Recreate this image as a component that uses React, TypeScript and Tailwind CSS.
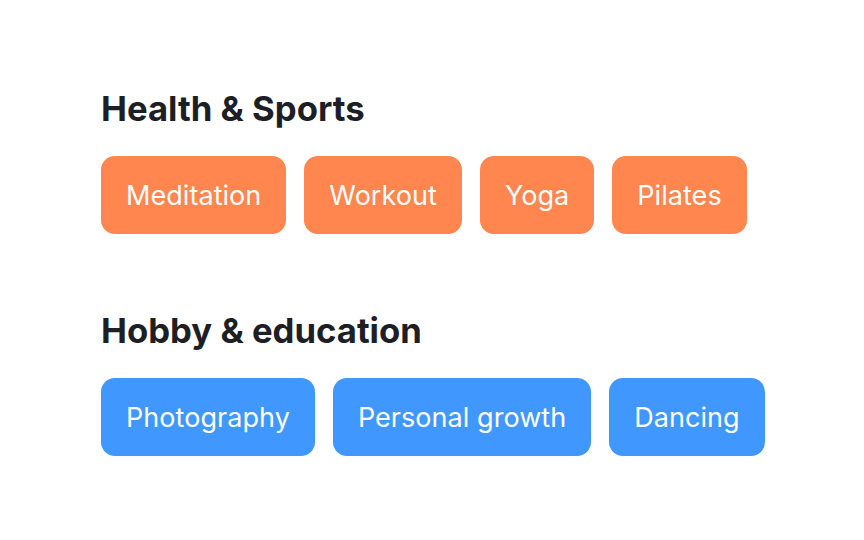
import React from 'react';

const groups = [
  {
    title: 'Health & Sports',
    color: 'bg-[#ff864e]',
    items: ['Meditation', 'Workout', 'Yoga', 'Pilates'],
  },
  {
    title: 'Hobby & education',
    color: 'bg-[#4097fe]',
    items: ['Photography', 'Personal growth', 'Dancing'],
  },
];

export default function App() {
  return (
    <div className="w-[864px] h-[540px] bg-white font-['Inter',sans-serif] pl-[101px] pt-[88px] flex flex-col gap-[76px]">
      {groups.map((g) => (
        <div key={g.title} className="flex flex-col gap-[28px]">
          <h2 className="text-[34.7px] leading-[40px] font-bold text-[#1e1f26]">{g.title}</h2>
          <div className="flex gap-[18px]">
            {g.items.map((item) => (
              <div
                key={item}
                className={`${g.color} h-[78px] px-[25px] pt-[3px] rounded-[14px] flex items-center text-white text-[27px] tracking-[0.05px]`}
              >
                {item}
              </div>
            ))}
          </div>
        </div>
      ))}
    </div>
  );
}
